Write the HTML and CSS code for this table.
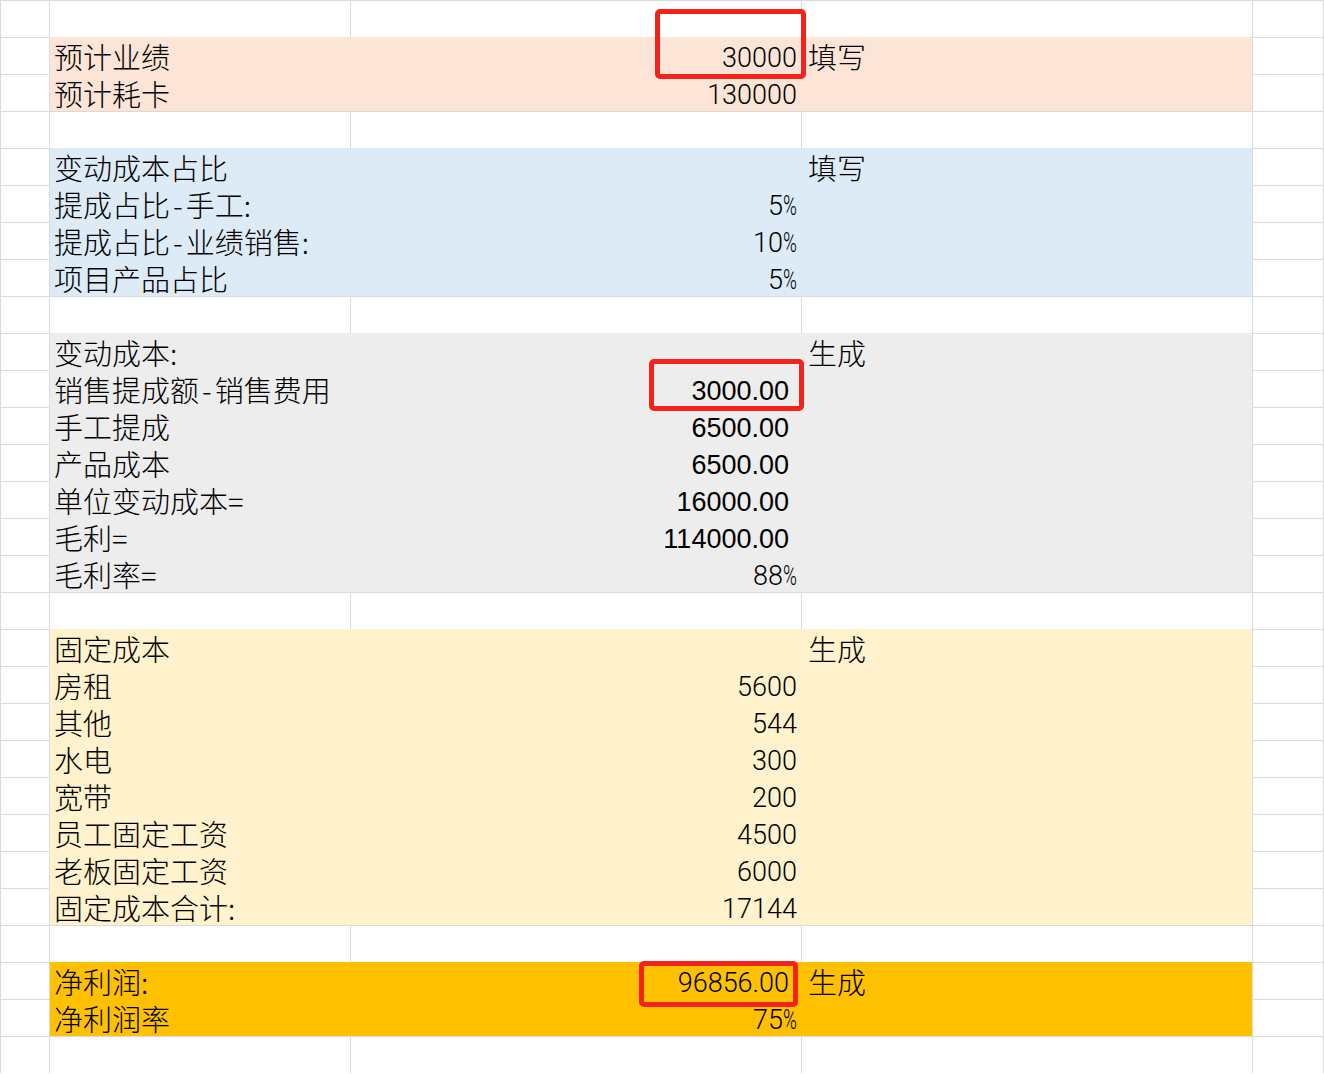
FILE: index.html
```html
<!DOCTYPE html>
<html lang="zh-CN">
<head>
<meta charset="utf-8">
<title>成本核算</title>
<link rel="stylesheet" href="styles.css">
</head>
<body>
<div class="sheet">
  <div class="row"><div class="c a"></div><div class="c b"></div><div class="c n"></div><div class="c d"></div><div class="c e"></div></div>

  <div class="row peach"><div class="c a"></div><div class="c b">预计业绩</div><div class="c n"><span class="v">30000</span></div><div class="c d">填写</div><div class="c e"></div></div>
  <div class="row peach"><div class="c a"></div><div class="c b">预计耗卡</div><div class="c n"><span class="v">130000</span></div><div class="c d"></div><div class="c e"></div></div>

  <div class="row"><div class="c a"></div><div class="c b"></div><div class="c n"></div><div class="c d"></div><div class="c e"></div></div>

  <div class="row blue"><div class="c a"></div><div class="c b">变动成本占比</div><div class="c n"></div><div class="c d">填写</div><div class="c e"></div></div>
  <div class="row blue"><div class="c a"></div><div class="c b">提成占比<span class="dash">-</span>手工:</div><div class="c n"><span class="v">5<span class="pct">%</span></span></div><div class="c d"></div><div class="c e"></div></div>
  <div class="row blue"><div class="c a"></div><div class="c b">提成占比<span class="dash">-</span>业绩销售:</div><div class="c n"><span class="v">10<span class="pct">%</span></span></div><div class="c d"></div><div class="c e"></div></div>
  <div class="row blue"><div class="c a"></div><div class="c b">项目产品占比</div><div class="c n"><span class="v">5<span class="pct">%</span></span></div><div class="c d"></div><div class="c e"></div></div>

  <div class="row"><div class="c a"></div><div class="c b"></div><div class="c n"></div><div class="c d"></div><div class="c e"></div></div>

  <div class="row gray"><div class="c a"></div><div class="c b">变动成本:</div><div class="c n"></div><div class="c d">生成</div><div class="c e"></div></div>
  <div class="row gray"><div class="c a"></div><div class="c b">销售提成额<span class="dash">-</span>销售费用</div><div class="c n dec"><span class="v">3000.00</span></div><div class="c d"></div><div class="c e"></div></div>
  <div class="row gray"><div class="c a"></div><div class="c b">手工提成</div><div class="c n dec"><span class="v">6500.00</span></div><div class="c d"></div><div class="c e"></div></div>
  <div class="row gray"><div class="c a"></div><div class="c b">产品成本</div><div class="c n dec"><span class="v">6500.00</span></div><div class="c d"></div><div class="c e"></div></div>
  <div class="row gray"><div class="c a"></div><div class="c b">单位变动成本=</div><div class="c n dec"><span class="v">16000.00</span></div><div class="c d"></div><div class="c e"></div></div>
  <div class="row gray"><div class="c a"></div><div class="c b">毛利=</div><div class="c n dec"><span class="v">114000.00</span></div><div class="c d"></div><div class="c e"></div></div>
  <div class="row gray"><div class="c a"></div><div class="c b">毛利率=</div><div class="c n"><span class="v">88<span class="pct">%</span></span></div><div class="c d"></div><div class="c e"></div></div>

  <div class="row"><div class="c a"></div><div class="c b"></div><div class="c n"></div><div class="c d"></div><div class="c e"></div></div>

  <div class="row cream"><div class="c a"></div><div class="c b">固定成本</div><div class="c n"></div><div class="c d">生成</div><div class="c e"></div></div>
  <div class="row cream"><div class="c a"></div><div class="c b">房租</div><div class="c n"><span class="v">5600</span></div><div class="c d"></div><div class="c e"></div></div>
  <div class="row cream"><div class="c a"></div><div class="c b">其他</div><div class="c n"><span class="v">544</span></div><div class="c d"></div><div class="c e"></div></div>
  <div class="row cream"><div class="c a"></div><div class="c b">水电</div><div class="c n"><span class="v">300</span></div><div class="c d"></div><div class="c e"></div></div>
  <div class="row cream"><div class="c a"></div><div class="c b">宽带</div><div class="c n"><span class="v">200</span></div><div class="c d"></div><div class="c e"></div></div>
  <div class="row cream"><div class="c a"></div><div class="c b">员工固定工资</div><div class="c n"><span class="v">4500</span></div><div class="c d"></div><div class="c e"></div></div>
  <div class="row cream"><div class="c a"></div><div class="c b">老板固定工资</div><div class="c n"><span class="v">6000</span></div><div class="c d"></div><div class="c e"></div></div>
  <div class="row cream"><div class="c a"></div><div class="c b">固定成本合计:</div><div class="c n"><span class="v">17144</span></div><div class="c d"></div><div class="c e"></div></div>

  <div class="row"><div class="c a"></div><div class="c b"></div><div class="c n"></div><div class="c d"></div><div class="c e"></div></div>

  <div class="row gold"><div class="c a"></div><div class="c b">净利润:</div><div class="c n dec thin"><span class="v">96856.00</span></div><div class="c d">生成</div><div class="c e"></div></div>
  <div class="row gold"><div class="c a"></div><div class="c b">净利润率</div><div class="c n"><span class="v">75<span class="pct">%</span></span></div><div class="c d"></div><div class="c e"></div></div>

  <div class="row last"><div class="c a"></div><div class="c b"></div><div class="c n"></div><div class="c d"></div><div class="c e"></div></div>

  <div class="mark mark-1"></div>
  <div class="mark mark-2"></div>
  <div class="mark mark-3"></div>
</div>
</body>
</html>
```

FILE: styles.css
```css
* { box-sizing: border-box; }

html, body {
  margin: 0;
  padding: 0;
  background: #ffffff;
}

.sheet {
  position: relative;
  width: 1324px;
  font-family: "Noto Sans CJK SC", "Noto Sans", sans-serif;
  font-size: 29px;
  font-weight: 300;
  color: #000000;
}

.row {
  display: grid;
  grid-template-columns: 49px 301px 451px 451px 72px;
  height: 37px;
}

.c {
  height: 37px;
  border-top: 1px solid #dadada;
  border-left: 1px solid #dadada;
  line-height: 36px;
  white-space: nowrap;
  overflow: visible;
}

.c.e { border-right: 1px solid #dadada; }

.row.last .c { height: 38px; border-bottom: 1px solid #dadada; }

.c.b { padding-left: 4px; }
.c.n { text-align: right; padding-right: 4px; }
.c.n.dec { padding-right: 12px; }
.c.d { padding-left: 6px; }

.dash { margin: 0 3px; }

.v {
  position: relative;
  top: -2px;
  font-family: "Roboto", "Liberation Sans", sans-serif;
  font-size: 27px;
  font-weight: 300;
  line-height: 1;
}

.c.n.dec .v {
  font-family: "Liberation Sans", Arial, sans-serif;
  font-weight: 400;
}

.c.n.dec.thin .v {
  font-family: "Roboto", "Liberation Sans", sans-serif;
  font-weight: 300;
}

.pct {
  display: inline-block;
  width: 14px;
  transform: scaleX(0.7);
  transform-origin: left center;
}

.row.peach .b, .row.peach .n, .row.peach .d { background: #fce4d6; }
.row.blue .b, .row.blue .n, .row.blue .d { background: #ddebf7; }
.row.gray .b, .row.gray .n, .row.gray .d { background: #ededed; }
.row.cream .b, .row.cream .n, .row.cream .d { background: #fff2cc; }
.row.gold .b, .row.gold .n, .row.gold .d { background: #ffc000; }

.row.peach .b, .row.blue .b, .row.gray .b, .row.cream .b, .row.gold .b { border-top-color: transparent; }
.row.peach .n, .row.blue .n, .row.gray .n, .row.cream .n, .row.gold .n,
.row.peach .d, .row.blue .d, .row.gray .d, .row.cream .d, .row.gold .d {
  border-top-color: transparent;
  border-left-color: transparent;
}

.mark {
  position: absolute;
  border: 5px solid #f5221b;
  border-radius: 5px;
}

.mark-1 { left: 655px; top: 9px; width: 151px; height: 70px; }
.mark-2 { left: 649px; top: 359px; width: 155px; height: 52px; }
.mark-3 { left: 639px; top: 961px; width: 159px; height: 46px; }
```
